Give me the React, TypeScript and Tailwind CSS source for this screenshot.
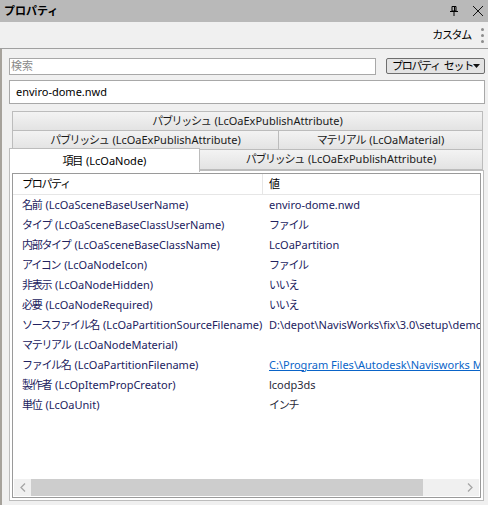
import React from "react";

type Row = { name: string; value: string; link?: boolean; dark?: boolean; jp?: boolean };

const ROWS: Row[] = [
  { name: "名前 (LcOaSceneBaseUserName)", value: "enviro-dome.nwd" },
  { name: "タイプ (LcOaSceneBaseClassUserName)", value: "ファイル", jp: true },
  { name: "内部タイプ (LcOaSceneBaseClassName)", value: "LcOaPartition" },
  { name: "アイコン (LcOaNodeIcon)", value: "ファイル", jp: true },
  { name: "非表示 (LcOaNodeHidden)", value: "いいえ", jp: true },
  { name: "必要 (LcOaNodeRequired)", value: "いいえ", jp: true },
  {
    name: "ソースファイル名 (LcOaPartitionSourceFilename)",
    value: "D:\\depot\\NavisWorks\\fix\\3.0\\setup\\demo\\enviro-dome.nwd",
  },
  { name: "マテリアル (LcOaNodeMaterial)", value: "" },
  {
    name: "ファイル名 (LcOaPartitionFilename)",
    value: "C:\\Program Files\\Autodesk\\Navisworks Manage\\enviro-dome.nwd",
    link: true,
  },
  { name: "製作者 (LcOpItemPropCreator)", value: "lcodp3ds", dark: true },
  { name: "単位 (LcOaUnit)", value: "インチ", dark: true, jp: true },
];

const tabCell =
  "flex h-[20px] items-center justify-center border border-[#bcbcbc] bg-gradient-to-b from-[#f3f3f3] to-[#e3e3e3] text-[11px] text-[#1a1a1a] whitespace-nowrap";

// Japanese part rendered tighter, like Meiryo UI
function Label({ text }: { text: string }) {
  const cut = text.indexOf(" (");
  if (cut < 0) return <span className="tracking-[-1.3px]">{text}</span>;
  return (
    <>
      <span className="tracking-[-1.3px]">{text.slice(0, cut)}</span>
      <span className="ml-[4px]">{text.slice(cut + 1)}</span>
    </>
  );
}

function PinIcon() {
  return (
    <svg width="10" height="10" viewBox="0 0 10 10" className="text-black">
      <path d="M3 0.5h4v4.5h-4z" fill="none" stroke="currentColor" strokeWidth="1" />
      <path d="M5.5 1v4" stroke="currentColor" strokeWidth="1" />
      <path d="M1 5.5h8" stroke="currentColor" strokeWidth="1" />
      <path d="M5 6v4" stroke="currentColor" strokeWidth="1" />
    </svg>
  );
}

function CloseIcon() {
  return (
    <svg width="12" height="12" viewBox="0 0 12 12">
      <path d="M1 1l10 10M11 1L1 11" stroke="#111" strokeWidth="1" />
    </svg>
  );
}

function PropertyList() {
  return (
    <div className="flex h-full flex-col border border-[#9a9a9a] bg-white">
      <div className="flex h-[21px] shrink-0 border-b border-[#e6e6e6] text-[11px] text-black">
        <div className="flex w-[250px] items-center border-r border-[#e6e6e6] pl-[9px]">
          <span className="tracking-[-1.3px]">プロパティ</span>
        </div>
        <div className="flex items-center pl-[6px]">値</div>
      </div>
      <div className="flex-1 overflow-hidden">
        {ROWS.map((row) => (
          <div key={row.name} className="flex h-[20px] items-center text-[11px] text-[#222260]">
            <div className="w-[250px] shrink-0 overflow-hidden whitespace-nowrap pl-[9px]">
              <Label text={row.name} />
            </div>
            <div
              className={
                row.link
                  ? "min-w-0 flex-1 overflow-hidden whitespace-nowrap pl-[6px] text-[#0a64c8] underline"
                  : row.dark
                    ? "min-w-0 flex-1 overflow-hidden whitespace-nowrap pl-[6px] text-[#2a2a3a]"
                    : "min-w-0 flex-1 overflow-hidden whitespace-nowrap pl-[6px]"
              }
            >
              {row.jp ? <span className="tracking-[-1.3px]">{row.value}</span> : row.value}
            </div>
          </div>
        ))}
      </div>
      <div className="mx-[1px] mb-[1px] flex h-[17px] shrink-0 bg-[#f0f0f0]">
        <div className="flex w-[17px] items-center justify-center">
          <svg width="6" height="9" viewBox="0 0 6 9">
            <path d="M5 0.5L1 4.5L5 8.5" fill="none" stroke="#a6a6a6" strokeWidth="1.3" />
          </svg>
        </div>
        <div className="w-[392px] bg-[#cdcdcd]" />
        <div className="flex flex-1 items-center justify-end pr-[6px]">
          <svg width="6" height="9" viewBox="0 0 6 9">
            <path d="M1 0.5L5 4.5L1 8.5" fill="none" stroke="#a6a6a6" strokeWidth="1.3" />
          </svg>
        </div>
      </div>
    </div>
  );
}

export default function App() {
  return (
    <div
      className="flex h-[505px] w-[488px] flex-col overflow-hidden bg-[#f0f0f0]"
      style={{ fontFamily: '"Noto Sans", "Noto Sans CJK JP", sans-serif' }}
    >
      <div className="flex h-[22px] shrink-0 items-center bg-[#b9b9b9] pl-[4px] pr-[4px]">
        <span className="text-[11px] font-bold text-black">プロパティ</span>
        <div className="ml-auto flex items-center gap-[13px]">
          <PinIcon />
          <CloseIcon />
        </div>
      </div>

      <div className="flex h-[27px] shrink-0 items-center justify-end border-b border-[#a0a0a0] pr-[4px]">
        <span className="text-[11px] tracking-[-1.3px] text-black">カスタム</span>
        <div className="ml-[10px] flex flex-col gap-[3px]">
          <span className="h-[3px] w-[3px] rounded-full bg-[#8c8c8c]" />
          <span className="h-[3px] w-[3px] rounded-full bg-[#8c8c8c]" />
          <span className="h-[3px] w-[3px] rounded-full bg-[#8c8c8c]" />
        </div>
      </div>

      <div className="flex min-h-0 flex-1 flex-col border-l-2 border-[#a6a29b] pb-[4px] pl-[7px] pr-[3px] pt-[9px]">
        <div className="flex h-[17px] shrink-0 items-start gap-[10px]">
          <div className="flex h-[17px] flex-1 items-center border border-[#a8a8a8] bg-white pl-[1px] text-[11px] text-[#8a8a8a]">
            検索
          </div>
          <div className="flex h-[16px] w-[99px] items-center rounded-[2px] border border-[#6e6e6e] bg-[#e3e3e3] pl-[5px] pr-[5px] text-[11px] text-black">
            <span className="whitespace-nowrap tracking-[-1.3px]">プロパティ</span>
            <span className="ml-[4px] whitespace-nowrap tracking-[-1.3px]">セット</span>
            <svg className="ml-auto shrink-0" width="7" height="4" viewBox="0 0 7 4">
              <path d="M0 0h7L3.5 4z" fill="#111" />
            </svg>
          </div>
        </div>

        <div className="mt-[5px] flex h-[24px] shrink-0 items-center border border-[#a8a8a8] bg-white pl-[6px] text-[11px] text-black">
          enviro-dome.nwd
        </div>

        <div className="mt-[7px] shrink-0">
          <div className="ml-[3px] mr-[2px]">
            <div className={tabCell}>
              <Label text="パブリッシュ (LcOaExPublishAttribute)" />
            </div>
          </div>
          <div className="-mt-[1px] ml-[3px] mr-[2px] flex">
            <div className={`${tabCell} w-[267px]`}>
              <Label text="パブリッシュ (LcOaExPublishAttribute)" />
            </div>
            <div className={`${tabCell} -ml-[1px] flex-1`}>
              <Label text="マテリアル (LcOaMaterial)" />
            </div>
          </div>
          <div className="mr-[2px] flex h-[20px]">
            <div className="relative z-10 -mt-[2px] flex h-[24px] w-[191px] shrink-0 items-start justify-center border border-b-0 border-[#bcbcbc] bg-white pt-[4px] text-[11px] text-black">
              <Label text="項目 (LcOaNode)" />
            </div>
            <div className={`${tabCell} -ml-[1px] -mt-[1px] h-[21px] flex-1`}>
              <Label text="パブリッシュ (LcOaExPublishAttribute)" />
            </div>
          </div>
        </div>

        <div className="mr-[1px] flex min-h-0 flex-1 flex-col border border-[#bcbcbc] bg-white p-[2px]">
          <PropertyList />
        </div>
      </div>
    </div>
  );
}
